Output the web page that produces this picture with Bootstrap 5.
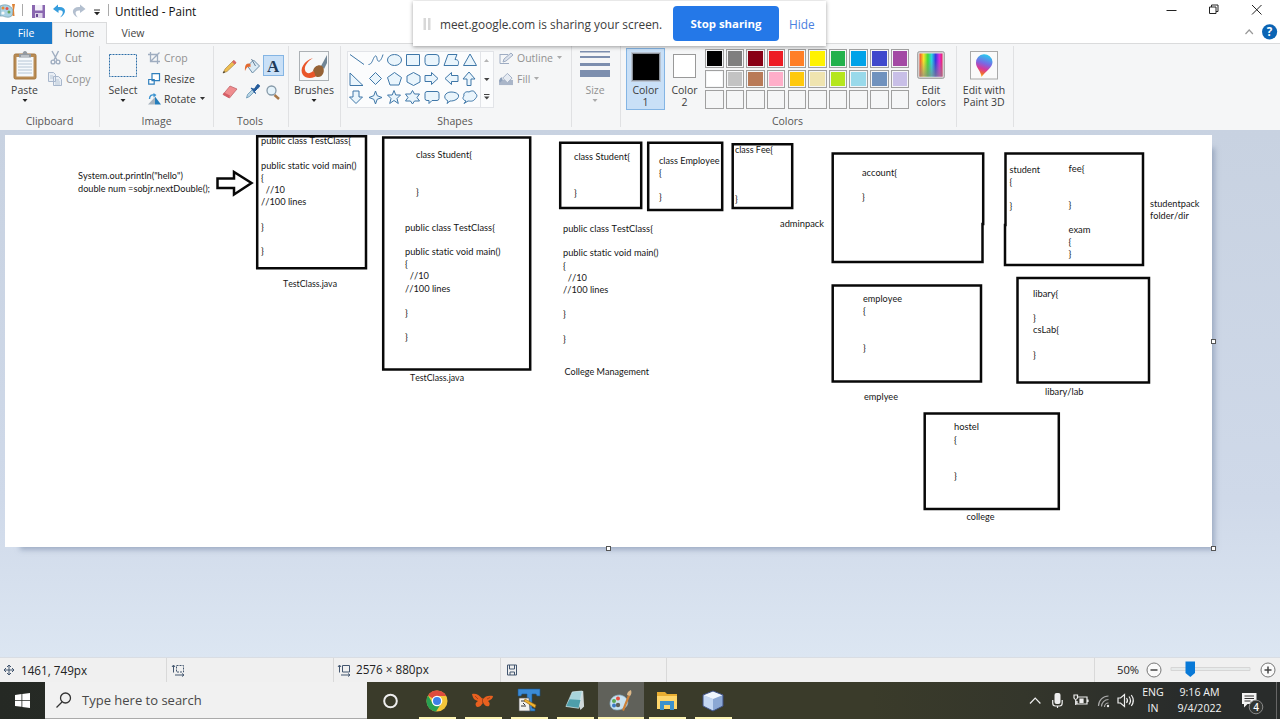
<!DOCTYPE html>
<html lang="en">
<head>
<meta charset="utf-8">
<title>Untitled - Paint</title>
<link href="https://cdn.jsdelivr.net/npm/bootstrap@5.3.0/dist/css/bootstrap.min.css" rel="stylesheet">
<style>
body{width:1280px;height:719px;overflow:hidden;font-family:"Open Sans",sans-serif;font-size:10.5px;line-height:12px;color:#3c3c3c;background:#fff}
svg{display:block;flex:none;overflow:visible}
.titlebar{height:22px}
.apptitle{font-size:11.7px;color:#111;margin-left:5px}
.tabs{height:22px;border-bottom:1px solid #dadbdc}
.tab{height:22px;line-height:22px;text-align:center;color:#444}
.tab.file{width:52px;background:#1979ca;color:#fff}
.tab.home{width:55px;background:#f5f6f7;border:1px solid #dadbdc;border-width:1px 1px 0;line-height:20px}
.tab.view{width:52px}
.ribbon{height:86px;padding-top:2px;background:#f5f6f7}
.grp{height:81px;border-right:1px solid #e0e1e3;flex:none}
.gbody{height:68px}
.glabel{text-align:center;line-height:14px;color:#555}
.w-clip{width:100px}.w-img{width:114px}.w-tools{width:75px}.w-brush{width:52px}.w-shapes{width:231px}.w-size{width:49px}.w-colors{width:336px}.w-3d{width:57px}
.w-shapes .glabel,.w-tools .glabel,.w-colors .glabel{padding-right:2px}
.big{padding-top:5px;display:flex;flex-direction:column;align-items:center;text-align:center;flex:none}
.w-paste{width:49px}
.w-select{width:48px;padding-right:2px}
.w-color2{width:39px}
.w-edit{width:38px}
.w-brush .big{margin-left:-1px}
.w-size .big,.w-3d .big{margin-left:-2px}
.big .ic{height:30px;display:flex;align-items:flex-start;margin-bottom:3px}
.big svg.arr{margin-top:3px}
.smallcol{padding-top:2px}
.row20{height:20.5px;display:flex;align-items:center;white-space:nowrap}
.row20>svg:first-child{margin-right:4px}
.row20>svg.turn:first-child{margin-right:3px}
.row20>svg:last-child{margin-left:4px}
.off{color:#919191}
.gallery{width:147px;height:57px;margin:5px 5px 0 6px;background:#fbfcfd;border:1px solid #e2e4e8}
.c1{width:39px;height:62px;margin:2px 0 0 5px;padding-top:3px;background:#c9e0f7;border:1px solid #84b5e4}
.c1 .ic{margin-bottom:2px}
.chip{width:30px;height:30px;background:#000;border:2px solid #8a9099;outline:1px solid #b9c4d2;outline-offset:-1px}
.chip2{width:23px;height:24px;margin-top:3px;background:#fff;border:1px solid #999}
.palette{display:grid;grid-template-columns:repeat(10,20.65px);grid-auto-rows:20.6px;margin:3px 0 0 1px;width:207px}
.swatch{width:18.5px;height:18.5px;border:1px solid #a0a0a0;padding:1px}
.swatch i{display:block;width:100%;height:100%}
.sharebar{position:absolute;left:413px;top:1px;width:413px;height:45px;background:#fff;box-shadow:0 1px 4px rgba(0,0,0,.38);z-index:5;font-size:11.85px}
.sharemsg{width:233px}
.stop{width:106px;height:35px;line-height:35px;border-radius:4px;background:#2478e8;color:#fff;font-weight:700;text-align:center;font-size:11.4px}
.hide-link{margin-left:10px;color:#4a80e0}
.workspace{height:527px;padding:5px 0 0 5px;background:linear-gradient(#c8d2e1,#cfd9e9 70%,#dce6f2)}
.sheet{position:relative;width:1207px;height:412px;background:#fff}
.sheet::after{content:"";position:absolute;left:12px;top:10px;right:0;bottom:0;box-shadow:3px 3px 5px rgba(120,138,168,.55);z-index:0}
.sheet>svg{position:relative;z-index:1;background:#fff;font-family:Lato,sans-serif;font-size:9.3px;font-kerning:none;font-variant-ligatures:none}
.grip{position:absolute;width:5px;height:5px;border:1px solid #555;background:#fff;z-index:2}
.g-e{left:1206px;top:204px}.g-s{left:601px;top:411px}.g-se{left:1206px;top:411px}
.status{height:25px;background:#f0f0f0;border-top:1px solid #d9dde3;color:#222;font-size:11.7px}
.cell{height:24px;border-right:1px solid #d9d9d9;display:flex;align-items:center;flex:none;white-space:nowrap}
.cell-a{width:167px}.cell-b{width:166px}.cell-c{width:428px}.cell-zoom{width:185px;padding-left:22px;font-size:11.2px}
.taskbar{height:37px;background:linear-gradient(90deg,#252924 0,#262a25 5%,#3a3b2a 28%,#3a3b2a 68%,#34362b 80%,#292c2b 92%);color:#f4f4f4}
.start{width:45px;padding-left:15px}
.search{width:322px;height:37px;background:#f1f1f1;color:#484848;font-size:13px;border-bottom:1px solid #aaa}
.apps{padding-left:1px}
.task{width:46px;height:37px;display:flex;align-items:center;justify-content:center;flex:none;position:relative}
.task.run::after{content:"";position:absolute;left:4.5px;right:4.5px;bottom:0;height:2px;background:#fdf5b4}
.task.on{background:#60615a}
.task.on::after{left:0;right:0}
.tray{font-size:10.6px;line-height:16px;text-align:center;padding-top:2px}
.tray-lang{width:38px}.tray-time{width:55px}
</style>
</head>
<body>
<header class="titlebar d-flex align-items-center">
  <svg width="110" height="22" viewBox="0 0 110 22">
    <path d="M0 6C6 3 13 6 13 12S7 18 3 16L0 16Z" fill="#a9d2e4" stroke="#6f9aab" stroke-width=".7"/><circle cx="3" cy="8" r="1.5" fill="#e88c35"/><circle cx="7" cy="8.5" r="1.5" fill="#e7524b"/><circle cx="9" cy="12" r="1.5" fill="#63a45a"/><circle cx="3" cy="13" r="1.6" fill="#f7f7f7"/>
    <path d="M12 4h3l-1 6 .5 6h-2l.5-6Z" fill="#dd8236"/><path d="M22.500 4v12" stroke="#aaa"/>
    <path d="M32 5h13v13H32Z" fill="#8a67b0"/><path d="M35 5h7.500v5.500H35Z" fill="#f3eff9"/><path d="M35 13h7.500v5H35Z" fill="#dcd2e8"/><path d="M36 14h2v3h-2Z" fill="#6a4894"/>
    <path d="M58 4.500 53 9l5.500 4V10.500c6-1 5 4 1.500 7C67 14 67 6 58 7Z" fill="#369ddd"/>
    <path d="M80 4.500 85.500 9 80 13V10.500c-6-.5-5 4-2 7C70 14 72 6 80 7Z" fill="#b3bfcf"/>
    <path d="M94 10h6" stroke="#333"/><path d="M94 12h6l-3 3.300Z" fill="#222"/><path d="M108.500 4v12" stroke="#aaa"/>
  </svg>
  <span class="apptitle">Untitled - Paint</span>
  <svg class="ms-auto" width="100" height="22" viewBox="1180 0 100 22" fill="none" stroke="#222"><path d="M1166.500 10.500h10"/><path d="M1209.500 7h6.500v6.500h-6.500ZM1211.500 7V5h6.500v6.500h-2"/><path d="m1252 5 9.500 9.500M1261.500 5l-9.500 9.500"/></svg>
</header>
<nav class="tabs d-flex">
  <div class="tab file">File</div><div class="tab home">Home</div><div class="tab view">View</div>
  <svg class="ms-auto" width="40" height="21" viewBox="1240 22 40 21"><path d="m1245.500 34 3.700-4 3.700 4" fill="none" stroke="#999" stroke-width="1.200"/><circle cx="1269.600" cy="31.800" r="7.600" fill="#0b64b4"/><text x="1266.700" y="36" font-size="11.500" font-weight="700" fill="#fff">?</text></svg>
</nav>

<section class="ribbon d-flex">
  <div class="grp w-clip">
    <div class="gbody d-flex">
      <div class="big w-paste"><div class="ic"><svg width="24" height="29" viewBox="0 0 24 29"><rect x="1" y="3" width="22" height="25" rx="1.500" fill="#b98c54" stroke="#a5763f"/><path d="M3.500 6h17v19.500h-17Z" fill="#f5f9fc"/><path d="M5 10h14M5 13h14M5 16h14M5 19h14M5 22h14" stroke="#b6c6d5"/><path d="M6 6.500V3h3.500C10-1 14-1 14.500 3H18v3.500Z" fill="#9299a0"/><path d="M8 5h8" stroke="#e4e7ea"/></svg></div>Paste<svg class="arr" width="6" height="4"><path d="M.5 0h5L3 3Z" fill="#222"/></svg></div>
      <div class="smallcol off">
        <div class="row20"><svg width="12" height="14" viewBox="0 0 12 14" fill="none" stroke="#9fadc0" stroke-width="1.400"><path d="M3 0 8 9M9.500 0 5 9"/><circle cx="4" cy="11" r="1.900"/><circle cx="9" cy="11" r="1.900"/></svg><span>Cut</span></div>
        <div class="row20"><svg width="13" height="14" viewBox="1 0 13 14" fill="#e9eef5" stroke="#a8b7cc"><path d="M.5 0.500h5l2 2v7h-7ZM5.500 4.500h5l3 3v6h-8Z"/><path d="M2 4h3M2 6h3M7 8h4M7 10h5M7 12h5" stroke-width=".7"/></svg><span>Copy</span></div>
      </div>
    </div><div class="glabel">Clipboard</div>
  </div>
  <div class="grp w-img">
    <div class="gbody d-flex">
      <div class="big w-select"><div class="ic"><svg width="30" height="30"><rect x="1.500" y="3.500" width="27" height="22" fill="none" stroke="#2d6fa8" stroke-dasharray="2 1"/></svg></div>Select<svg class="arr" width="6" height="4"><path d="M.5 0h5L3 3Z" fill="#222"/></svg></div>
      <div class="smallcol">
        <div class="row20 off"><svg width="12" height="12" viewBox="0 0 12 12" fill="none" stroke="#9fadc0" stroke-width="1.300"><path d="M2.500 0v9.500H12M0 2.500h9.500V12M2.500 9.500 11.500.5"/></svg><span>Crop</span></div>
        <div class="row20"><svg width="12" height="12" viewBox="0 0 12 12" fill="#fff" stroke="#2f7fbd" stroke-width="1.200"><path d="M4 .7h7.500v7H4ZM.7 6.500h5.500v4.700H.7Z"/></svg><span>Resize</span></div>
        <div class="row20"><svg class="turn" width="13" height="12" viewBox="0 0 13 12"><path d="M0 11.500h7V4Z" fill="#a8b4bf"/><path d="M7 3.500 13 11.500H7Z" fill="#247dbb"/><path d="M1.500 6C1.500 2 4 1.500 6 2" fill="none" stroke="#3b93d0" stroke-width="1.400"/><path d="m5.500 0 3 2-3 2.400Z" fill="#3b93d0"/></svg><span>Rotate</span><svg width="5" height="4"><path d="M0 0h5L2.500 3Z" fill="#333"/></svg></div>
      </div>
    </div><div class="glabel">Image</div>
  </div>
  <div class="grp w-tools">
    <div class="gbody"><svg width="74" height="68" viewBox="213.500 46 74 68">
      <path d="m222.500 73 2-4 8.500-8.500 2.500 2.500-9 8.500Z" fill="#eebd50" stroke="#9b7b3c" stroke-width=".6"/><path d="m231.500 62 2-2 2.500 2.500-2 2Z" fill="#d96868"/><path d="m222.300 73.200 2.400-1-1.200-1.300Z" fill="#333"/>
      <path d="m247 66 6-6 6 6-7 7Z" fill="#dcebf4" stroke="#6b8da8"/><path d="M250 64c-4-2-6 1-5.500 7 1.500-4 3-5 5.500-4Z" fill="#e36b31"/><path d="m251 59 4 7" stroke="#657f96"/>
      <rect x="263" y="55.500" width="20" height="20" fill="#c9e0f7" stroke="#84b5e4"/><text x="266.500" y="71.500" font-family="Liberation Serif,serif" font-weight="700" font-size="17" fill="#203a5a">A</text>
      <path d="m222.500 94.500 7-8.500 7 3-7.500 9Z" fill="#ef8d8f" stroke="#b95a60" stroke-width=".7"/><path d="m222.500 94.500 6 3.500 1-2.500-6-3Z" fill="#d65e66"/>
      <path d="m246 98 1-3.500 6-6 2 2-6 6Z" fill="#b8d5e6" stroke="#5588aa" stroke-width=".7"/><path d="m250.500 88 3 1.500 3.500-5c3 .5 2.500 2.500 0 4l-3 3 1 2Z" fill="#245b9b" stroke="#245b9b"/>
      <path d="m274 95 4.500 4" stroke="#a77748" stroke-width="2.400"/><circle cx="271" cy="90.500" r="4.500" fill="#e5f3fb" stroke="#8599a8" stroke-width="1.300"/>
    </svg></div><div class="glabel">Tools</div>
  </div>
  <div class="grp w-brush">
    <div class="gbody d-flex justify-content-center"><div class="big"><div class="ic"><svg width="30" height="30" viewBox="0 0 30 30"><rect x=".5" y=".5" width="29" height="29" fill="#f6f8f9" stroke="#acb1b5"/><path d="M14 7C5 10 0 18 4 24c3 4 11 4 16-1l-6-3c-3 3-7 3-8-1C5 15 9 10 14 7Z" fill="#e9562a"/><path d="m22 15 6-11v8l-3 6Z" fill="#718696"/><path d="M14 20c1-5 6-7 9-5 4 4 1 12-5 11-3-1-1-4-4-6Z" fill="#966336"/></svg></div>Brushes<svg class="arr" width="6" height="4"><path d="M.5 0h5L3 3Z" fill="#222"/></svg></div></div>
  </div>
  <div class="grp w-shapes">
    <div class="gbody d-flex">
      <div class="gallery"><svg width="145" height="55" viewBox="348 52 145 55" fill="#eaf5fc" stroke="#3f77a8" stroke-width="1">
        <path d="m350 54.500 14 10" fill="none"/><path d="M368.500 64.500c3 0 4-4 5-6 2-4 3-3 3.500 0 1 5 4 3 6-4" fill="none"/><ellipse cx="394.500" cy="60" rx="7" ry="5.500"/><path d="M406.500 54.500h13v11h-13Z"/><rect x="425" y="54.500" width="14" height="11" rx="3"/><path d="m444 65.500 4-11h9l-2 5c4 0 4 3 3 6ZM470 54l6.500 11.500h-13Z"/>
        <path d="M350 73v12.500h13ZM375.500 72.500l6 6-6 6-6-6ZM394.500 72.500l7 5-2.500 7.500h-9l-2.500-7.500ZM413.500 72.500l6.500 3.500v6l-6.500 3.500-6.500-3.500v-6ZM425 75.500h6.500v-3l6.500 6-6.500 6v-3H425ZM458 75.500h-6.500v-3l-6.500 6 6.500 6v-3h6.500ZM467 85.500v-6.500h-4l6-7 6 7h-4v6.500Z"/>
        <path d="M353 91v6h-3.500l6.500 6.500 6.500-6.500H359v-6ZM375.500 91l1.700 4.700 4.800 1.800-4.800 1.800-1.700 4.700-1.700-4.700-4.800-1.800 4.800-1.800ZM394 90.500l1.800 4.500h4.700l-3.500 3.500 1.300 5-4.300-3-4.300 3 1.300-5-3.500-3.500h4.700ZM412.500 90.500l2 3.500h5l-2.500 3.500 2.500 3.500h-5l-2 3-2-3h-5l2.500-3.500-2.500-3.500h5Z"/>
        <path d="M427 91.500h10q2 0 2 2v5q0 2-2 2h-5l-3 3v-3h-2q-2 0-2-2v-5q0-2 2-2ZM448 101c-6-3-3-9 3-9s10 3 6 7c-3 2-5 2-7 2l-3 2.500ZM466 101c-3-1-4-3-2-5-1-3 2-5 5-4 3-2 6-1 6 1 3 2 2 4 0 6-2 3-5 2-7 2l-4 2.500Z"/>
        <path d="M480.500 52v55" stroke="#e2e4e8"/><path d="m484 62 2.500-3 2.500 3Z" fill="#b5b5b5" stroke="none"/><path d="M484 78h5.500l-2.700 3ZM484 96.500h5.500l-2.700 3ZM484 94h5.500v1H484Z" fill="#444" stroke="none"/></svg></div>
      <div class="smallcol off">
        <div class="row20"><svg width="14" height="13" viewBox="0 0 14 13" fill="none" stroke="#9eacc2"><path d="M1 2.500h8M1 2v9.500h9"/><path d="m4 10 1-3 7-6 2 2-7 6Z" fill="#dde3ec"/></svg><span>Outline</span><svg width="5" height="4"><path d="M0 0h5L2.500 3Z" fill="#aaa"/></svg></div>
        <div class="row20"><svg width="14" height="14" viewBox="0 0 15 14"><path d="M0 8h15v5.500H0Z" fill="#aab6c9"/><path d="m4 6 5-5 5 5-5 5Z" fill="#e6ebf2" stroke="#9eacc2"/><path d="M3 5C0 6 0 9 1 11l3-3Z" fill="#8ea0ba"/></svg><span>Fill</span><svg width="5" height="4"><path d="M0 0h5L2.500 3Z" fill="#aaa"/></svg></div>
      </div>
    </div><div class="glabel">Shapes</div>
  </div>
  <div class="grp w-size off">
    <div class="gbody d-flex justify-content-center"><div class="big"><div class="ic"><svg width="30" height="27" fill="#7c8eae"><path d="M0 0h30v1.500H0ZM0 5h30v2H0ZM0 12h30v3H0ZM0 19h30v7H0Z"/></svg></div>Size<svg class="arr" width="6" height="4"><path d="M.5 0h5L3 3Z" fill="#aaa"/></svg></div></div>
  </div>
  <div class="grp w-colors">
    <div class="gbody d-flex">
      <div class="big c1"><div class="ic"><div class="chip"></div></div>Color<br>1</div>
      <div class="big w-color2"><div class="ic"><div class="chip2"></div></div>Color<br>2</div>
      <div class="palette" id="palette"></div>
      <div class="big w-edit"><div class="ic"><svg width="28" height="28" viewBox="0 0 28 28"><defs><linearGradient id="hue"><stop offset="0" stop-color="#f24a2a"/><stop offset=".18" stop-color="#f5e62c"/><stop offset=".36" stop-color="#43d838"/><stop offset=".53" stop-color="#2ad4e4"/><stop offset=".7" stop-color="#3438e0"/><stop offset=".86" stop-color="#d62be0"/><stop offset="1" stop-color="#f02060"/></linearGradient><linearGradient id="grey" x2="0" y2="1"><stop offset=".3" stop-color="#888" stop-opacity="0"/><stop offset="1" stop-color="#888" stop-opacity=".7"/></linearGradient></defs><rect x=".7" y=".7" width="26.600" height="26.600" rx="1.500" fill="#ddd" stroke="#999"/><path d="M2.500 2.500h23v23h-23Z" fill="url(#hue)"/><path d="M2.500 2.500h23v23h-23Z" fill="url(#grey)"/></svg></div>Edit<br>colors</div>
    </div><div class="glabel">Colors</div>
  </div>
  <div class="grp w-3d">
    <div class="gbody d-flex justify-content-center"><div class="big text-nowrap"><div class="ic"><svg width="28" height="29" viewBox="0 0 28 29"><defs><linearGradient id="drop" x1=".6" x2=".35" y2="1"><stop offset="0" stop-color="#24cdf0"/><stop offset=".4" stop-color="#7a68e4"/><stop offset=".65" stop-color="#d8389a"/><stop offset=".85" stop-color="#f06a32"/><stop offset="1" stop-color="#f9c926"/></linearGradient></defs><rect x=".5" y=".5" width="27" height="27.500" fill="#fafafa" stroke="#a9a9a9"/><path d="M11.500 26c-1-7-5.500-9-5.500-14a8 8 0 0 1 16.500-1c0 6-7 9-11 15Z" fill="url(#drop)"/></svg></div>Edit with<br>Paint 3D</div></div>
  </div>
</section>

<div class="sharebar d-flex align-items-center">
  <svg width="27" height="14"><path d="M10.500 1h2.500v12h-2.500ZM15 1h2.500v12H15Z" fill="#d8d8d8"/></svg>
  <span class="sharemsg text-nowrap">meet.google.com is sharing your screen.</span>
  <div class="stop">Stop sharing</div><span class="hide-link">Hide</span>
</div>

<main class="workspace">
  <div class="sheet">
    <svg id="drawing" width="1207" height="412" viewBox="5 135 1207 412">
      <g fill="none" stroke="#080808" stroke-width="2.500">
        <path d="M257.200 136.200h108.800v132H257.200Z"/><path d="M383.200 137.500h147v232h-147Z"/><path d="M560.200 142.800h81V208h-81Z"/><path d="M648.200 142.800h74V210h-74Z"/><path d="M732.700 144.200h59.500V208h-59.500Z"/>
        <path d="M832.700 153.500h150.500V224h-.7v38H832.700Z"/><path d="M1005.500 153.500h137.500V265h-138v-40h.5Z"/><path d="M832.700 285.500H981V381.500H832.700Z"/><path d="M1017.500 278h131.500v104.500h-131.500Z"/><path d="M924.700 413.500H1058.800v95.500H924.700Z"/>
        <path d="M217.500 178.500H234V172l17.500 11-17.500 11.500V188h-16.500Z"/>
      </g>
    </svg>
    <span class="grip g-e"></span><span class="grip g-s"></span><span class="grip g-se"></span>
  </div>
</main>

<footer class="status d-flex">
  <div class="cell cell-a"><svg width="21" height="14" viewBox="0 0 21 14" stroke="#43566f" fill="none"><path d="M4 7h10M9 2v10M6 5 4 7l2 2M12 5l2 2-2 2M7 4l2-2 2 2M7 10l2 2 2-2"/></svg>1461, 749px</div>
  <div class="cell cell-a"><svg width="20" height="14" viewBox="167 0 20 14" stroke="#43566f" fill="none"><path d="M173.500 2.500v7M172 4l1.500-2 1.500 2"/><path d="M176.500 2.500h7v6.500h-7Z" stroke-dasharray="2 1"/><path d="M175 12h8.500M182 10.500l2 1.500-2 1.500"/></svg></div>
  <div class="cell cell-a"><svg width="22" height="14" viewBox="335 0 22 14" stroke="#43566f" fill="none"><path d="M340.500 2.500v7M339 4l1.500-2 1.500 2M343.500 2.500h7v6.500h-7ZM342 12h8.500M349 10.500l2 1.500-2 1.500"/></svg><span class="lh-1">2576 × 880px</span></div>
  <div class="cell cell-b"><svg width="20" height="14" viewBox="501 0 20 14" stroke="#43566f" fill="none"><path d="M507.500 2h9v10h-9ZM509.500 2v4h5V2M510 12V9h4.500v3"/></svg></div>
  <div class="cell cell-c"></div>
  <div class="cell cell-zoom border-0"><span>50%</span><svg width="140" height="24" viewBox="1139.500 658.500 140 24" fill="none"><circle cx="1154.500" cy="670.500" r="7" fill="#fafafa" stroke="#777"/><path d="M1151 670.500h7" stroke="#444" stroke-width="1.500"/><path d="M1171.500 668h79v3h-79Z" fill="#e7eaea" stroke="#d6d6d6"/><path d="M1186 662h9.500v11.500l-4.700 4-4.800-4Z" fill="#0879d7"/><circle cx="1268.500" cy="670.500" r="7" fill="#fafafa" stroke="#777"/><path d="M1265 670.500h7M1268.500 667v7" stroke="#444" stroke-width="1.500"/></svg></div>
</footer>

<div class="taskbar d-flex">
  <div class="start d-flex align-items-center"><svg width="15" height="15" viewBox="0 0 15 15" fill="#fff"><path d="M0 2 6.500 1v6H0ZM7.300 1 15 0v7H7.300ZM0 7.800h6.500v6L0 13ZM7.300 7.800H15V15l-7.700-1Z"/></svg></div>
  <div class="search d-flex align-items-center"><svg width="37" height="20" viewBox="0 0 37 20" fill="none" stroke="#333" stroke-width="1.300"><circle cx="20.500" cy="8" r="5"/><path d="m17 12-5.500 5.500"/></svg><span>Type here to search</span></div>
  <div class="apps d-flex">
  <div class="task"><svg width="16" height="16"><circle cx="7.500" cy="8" r="6.300" fill="none" stroke="#eee" stroke-width="2"/></svg></div>
  <div class="task run"><svg width="22" height="22" viewBox="0 0 22 22"><circle cx="11" cy="11" r="10.500" fill="#f4c63a"/><path d="M11 11 2 5.500A10.500 10.500 0 0 1 20.300 6H11Z" fill="#df4b3e"/><path d="M2 5.500A10.500 10.500 0 0 0 10 21.500L15.500 13 11 11 6.600 13Z" fill="#28a052"/><circle cx="11" cy="11" r="5.300" fill="#fff"/><circle cx="11" cy="11" r="4" fill="#3e7fe8"/></svg></div>
  <div class="task run"><svg width="22" height="18" viewBox="0 0 22 18"><path d="M10.500 7C7 2 3 1 0 2c1 4 2 6 6 7-3 2-3 4-1 6 3 0 5-2 6-5 1 3 3 5 6 4 1-2 1-3-1-5 3-1 5-3 5-5-4-1-8 0-10 3Z" fill="#e8601f"/><path d="M10.500 6v6M6 7 3 4M15 7l3-1.500" stroke="#a5431a"/></svg></div>
  <div class="task run"><svg width="24" height="23" viewBox="0 0 24 23"><path d="M1 0h22v7h-3l-1-2h-4v14l3 1v2H8v-2l2-1V5H5L4 7H1Z" fill="#3b8bd6" stroke="#19548f" stroke-width=".6"/><path d="M2 9h10l1 13H2Z" fill="#f2f2ef" stroke="#555" stroke-width=".7"/><path d="M4 12h4M4 17h5M6 14l2 2" stroke="#333"/><path d="m8 10 11 6-1 3L7 12Z" fill="#efb32f" stroke="#8c5d13" stroke-width=".6"/></svg></div>
  <div class="task run"><svg width="22" height="20" viewBox="0 0 22 22"><path d="M8 1 20 0l1 17-4 4-1-3Z" fill="#cfd9da"/><path d="M8 1 19 0l-4 19-14-2Z" fill="#a8d4da" stroke="#d7ebed" stroke-width=".7"/><path d="M5 9 17 10l-2 8.500-13.500-2Z" fill="#4e9eaa"/></svg></div>
  <div class="task run on"><svg width="24" height="22" viewBox="0 0 24 22"><path d="M11 5C4 5 1 9 1 14c1 6 6 7 12 5 8-2 8-12-2-14Z" fill="#c8e1ef" stroke="#89b4cb" stroke-width=".7"/><circle cx="5" cy="11" r="2" fill="#5ba954"/><circle cx="9" cy="8.500" r="2" fill="#e64f41"/><circle cx="5" cy="15.500" r="2" fill="#3b79c3"/><circle cx="9" cy="15" r="2.200" fill="#60615a"/><path d="m19 5 2 1-6 15-2-1Z" fill="#cc8038"/><path d="M18 5c0-3 2-4 4-5 1 3 0 5-1 6Z" fill="#ddb989"/></svg></div>
  <div class="task run"><svg width="20" height="18" viewBox="0 0 20 18"><path d="M0 0h8l2 2h10v15H0Z" fill="#e9ae32"/><path d="M0 4h20v13H0Z" fill="#ffd66b"/><path d="M3 18V9h14v9h-4v-5H7v5Z" fill="#3c91cd"/></svg></div>
  <div class="task run"><svg width="20" height="20" viewBox="0 0 20 20"><path d="M10 0 20 4v11l-10 5-10-5V4Z" fill="#8ba7d4"/><path d="M0 4l10 4v12L0 15Z" fill="#c3d6f2"/><path d="m10 0 10 4-10 4L0 4Z" fill="#eff5fd"/><path d="M10 0 20 4v11l-10 5-10-5V4Z" fill="none" stroke="#3c4f83"/></svg></div>
  </div>
  <svg class="ms-auto" width="108" height="37" viewBox="1026 682 108 37" fill="none" stroke="#eee" stroke-width="1.200">
    <path d="m1030 703.500 5.200-5.500 5.200 5.500"/><rect x="1054.500" y="693" width="6" height="11" rx="2" fill="#eee" stroke="none"/><path d="M1052.700 700v3q0 3 2.500 3h4.500q2.500 0 2.500-3v-3M1057.500 706v2"/>
    <path d="M1078 697h9v7h-10v-3M1088 699.500v2.500M1074 695v3q1.500 3 3.500 0v-3ZM1075.700 700v5"/><path d="M1080 699h3v3.500h-3Z" fill="#eee"/>
    <path d="M1098.500 706a10 10 0 0 1 10-10M1101.500 706.500a7 7 0 0 1 7-7M1104.500 707a4 4 0 0 1 4-4" stroke="#aaa"/><circle cx="1108" cy="706" r="1.200" fill="#eee" stroke="none"/>
    <path d="M1118 698h2.500l4-3.500v12l-4-3.500h-2.500ZM1126.500 698q2 2.500 0 5M1129 696.500q3 4 0 8M1131.300 695q4 5.500 0 11"/>
  </svg>
  <div class="tray tray-lang">ENG<br>IN</div>
  <div class="tray tray-time">9:16 AM<br>9/4/2022</div>
  <svg width="53" height="37" viewBox="1227 682 53 37"><path d="M1242 693h14.500v11h-9l-3.500 3.500V704h-2Z" fill="#f3f3f3"/><path d="M1244.500 696h9.500M1244.500 698.500h9.500M1244.500 701h6" stroke="#333"/><circle cx="1256" cy="707" r="6.800" fill="#333633" stroke="#888"/><text x="1253.200" y="711" font-size="10" font-weight="600" fill="#fff">4</text><path d="M1276.500 682v37" stroke="#666"/></svg>
</div>

<script>
const colors = ['#000','#7f7f7f','#880015','#ed1c24','#ff7f27','#fff200','#22b14c','#00a2e8','#3f48cc','#a349a4',
  '#fff','#c3c3c3','#b97a57','#ffaec9','#ffc90e','#efe4b0','#b5e61d','#99d9ea','#7092be','#c8bfe7'];
const palette = document.getElementById('palette');
for (let i = 0; i < 30; i++) {
  const s = document.createElement('span'), f = document.createElement('i');
  s.className = 'swatch';
  f.style.background = colors[i] || '#f5f6f7';
  s.append(f); palette.append(s);
}
// Each note: left edge, baseline of its first line, width of the widest line, its lines.
const main = 'public class TestClass{\n\npublic static void main()\n{\n\u00a0\u00a0//10\n//100 lines\n\n}\n\n}';
const notes = [
  [78,179.3,132,'System.out.println("hello")\ndouble num =sobjr.nextDouble();'],
  [261,144.3,95.5,main],[283,286.5,54,'TestClass.java'],
  [416,158.3,56,'class Student{\n\n\n}'],[405,230.5,95.5,main],[410,381,54,'TestClass.java'],
  [574,159.6,56,'class Student{\n\n\n}'],[563,232,95.5,main],[564.5,374.5,84.5,'College Management'],
  [659,163.5,60.5,'class Employee\n{\n\n}'],[735,153,38,'class Fee{\n\n\n\n}'],[780,227.2,44,'adminpack'],
  [862,175.7,35,'account{\n\n}'],[1009.5,172.7,30.5,'student\n{\n\n}'],
  [1068.5,171.8,16,'fee{\n\n\n}'],[1068.5,232.8,22,'exam\n{\n}'],[1150,206.5,49.5,'studentpack\nfolder/dir'],
  [863,302,39,'employee\n{\n\n\n}'],[864,400.3,34,'emplyee'],
  [1033,296.6,26,'libary{\n\n}\ncsLab{\n\n}'],[1045,394.6,38.5,'libary/lab'],
  [954,430.3,25,'hostel\n{\n\n\n}'],[966.5,520.2,28,'college']
];
const ns = 'http://www.w3.org/2000/svg', drawing = document.getElementById('drawing');
for (const [x, y, width, body] of notes) {
  const lines = body.split('\n').map((line, i) => {
    if (!line) return null;
    const t = document.createElementNS(ns, 'text');
    t.setAttribute('x', x); t.setAttribute('y', y + i * 12.2);
    t.setAttribute('fill', '#151515');
    t.textContent = line; drawing.append(t);
    return t;
  }).filter(Boolean);
  const widest = Math.max(...lines.map(t => t.getComputedTextLength()));
  for (const t of lines) {
    t.setAttribute('textLength', t.getComputedTextLength() * width / widest);
    t.setAttribute('lengthAdjust', 'spacingAndGlyphs');
  }
}
</script>
<script src="https://cdn.jsdelivr.net/npm/bootstrap@5.3.0/dist/js/bootstrap.bundle.min.js"></script>
</body>
</html>
